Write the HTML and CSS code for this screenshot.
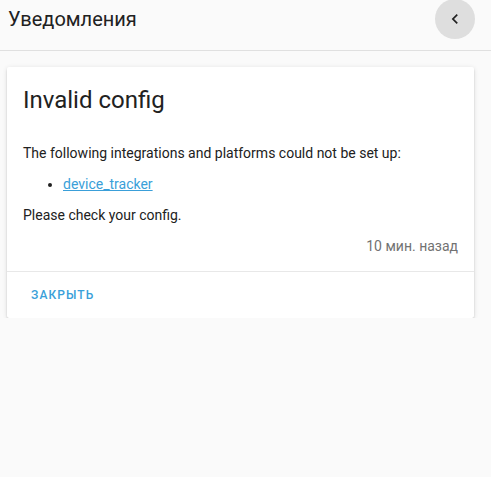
FILE: index.html
```html
<!DOCTYPE html>
<html lang="ru">
<head>
<meta charset="utf-8">
<link rel="stylesheet" href="styles.css">
</head>
<body>
<header class="toolbar">
  <div class="toolbar-row">
    <h1 class="toolbar-title">Уведомления</h1>
    <button class="icon-btn" aria-label="back">
      <svg viewBox="0 0 24 24" width="20" height="20"><path d="M15.41,16.58L10.83,12L15.41,7.41L14,6L8,12L14,18L15.41,16.58Z" fill="#212121"/></svg>
    </button>
  </div>
</header>
<main class="content">
  <section class="card">
    <div class="card-body">
      <h2 class="card-title">Invalid config</h2>
      <p class="text">The following integrations and platforms could not be set up:</p>
      <ul class="list"><li><a class="link" href="#">device_tracker</a></li></ul>
      <p class="text">Please check your config.</p>
      <div class="time">10 мин. назад</div>
    </div>
    <div class="card-actions">
      <button class="text-btn">Закрыть</button>
    </div>
  </section>
</main>
</body>
</html>
```
FILE: styles.css
```css
html, body {
  margin: 0;
  padding: 0;
  background: #fafafa;
  font-family: Roboto, "Noto Sans", sans-serif;
  color: #212121;
}
.toolbar {
  padding: 0 16px 13px 8px;
  border-bottom: 1px solid #e0e0e0;
}
.toolbar-row {
  height: 37px;
  display: flex;
  align-items: center;
  justify-content: space-between;
}
.toolbar-title {
  margin: 0;
  font-size: 20px;
  font-weight: 400;
}
.icon-btn {
  width: 40px;
  height: 40px;
  border: none;
  border-radius: 50%;
  background: #dedede;
  padding: 0;
  display: flex;
  align-items: center;
  justify-content: center;
}
.content {
  padding: 16px 17px 0 7px;
}
.card {
  background: #fff;
  border-radius: 2px;
  box-shadow: 0 2px 2px 0 rgba(0,0,0,.14), 0 1px 5px 0 rgba(0,0,0,.12), 0 3px 1px -2px rgba(0,0,0,.2);
}
.card-body {
  padding: 17px 16px 16px 16px;
}
.card-title {
  margin: 0 0 29px;
  font-size: 24px;
  font-weight: 400;
  line-height: 32px;
}
.text {
  margin: 0 0 14px;
  font-size: 14px;
  line-height: 17px;
}
.list {
  margin: 0 0 14px;
  padding-left: 40px;
  font-size: 14px;
  line-height: 17px;
}
.link {
  color: #3a9fd9;
}
.time {
  text-align: right;
  font-size: 14px;
  line-height: 17px;
  color: #727272;
}
.card-actions {
  border-top: 1px solid #e8e8e8;
  padding: 8px;
}
.text-btn {
  border: none;
  background: none;
  font-family: Roboto, sans-serif;
  font-size: 12px;
  font-weight: 500;
  letter-spacing: 1.1px;
  text-transform: uppercase;
  color: #3a9fd9;
  padding: 8px 16px;
  height: 30px;
}
```
